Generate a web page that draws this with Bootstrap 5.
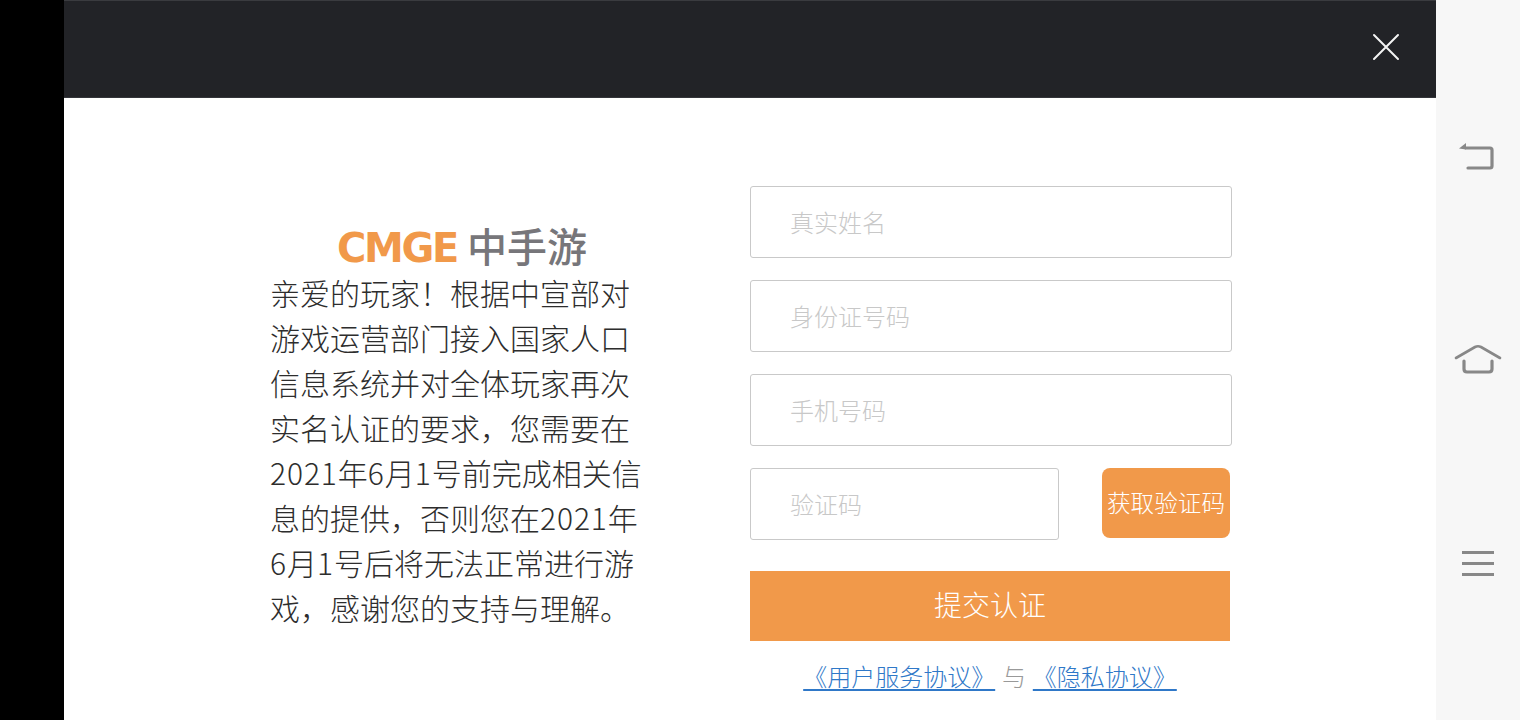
<!DOCTYPE html>
<html lang="zh-CN">
<head>
<meta charset="utf-8">
<title>实名认证</title>
<link rel="stylesheet" href="https://cdn.jsdelivr.net/npm/bootstrap@5.3.0/dist/css/bootstrap.min.css">
<style>
html,body{height:720px;overflow:hidden;background:#000}
body{font-family:"Noto Sans CJK SC","Liberation Sans",sans-serif}
.shell{height:720px}
.gutter{width:64px;background:#000}
.dialog{width:1372px;background:#fff}
.topbar{height:98px;background:#222327;border-top:1px solid #3a3b3f;border-bottom:1px solid #34353a;padding:0 36px 0 0}
.closer{background:none;border:0;padding:0;width:28px;height:28px;line-height:0;margin-top:-4px}
.sidebar{width:84px;background:#f7f7f7}
.sb-ico{width:84px;line-height:0}
.sb-back{margin-top:140px}
.sb-home{margin-top:167px}
.sb-menu{margin-top:175px}
.content{padding:88px 0 0 206px}
.intro{width:400px;padding-top:41px;margin-right:80px}
.brand{width:384px;height:36px;line-height:36px;white-space:nowrap}
.brand-en{font-family:"DejaVu Sans",sans-serif;font-weight:700;font-size:40px;color:#f1994a;letter-spacing:-2.3px}
.brand-cn{font-family:"Noto Sans CJK SC",sans-serif;font-weight:500;font-size:40px;color:#77767a;margin-left:10px}
.intro-text{font-size:30px;line-height:45px;color:#2d2d2d;font-weight:300;margin:7px 0 0;white-space:nowrap}
.num{letter-spacing:.9px}
.form-col{width:482px}
.field.form-control{height:72px;border:1px solid #c9c9c9;border-radius:3px;padding:0 0 2px 39px;font-size:24px;font-weight:300;color:#333;box-shadow:none}
.field.form-control::placeholder{color:#c8c8c8;opacity:1}
.field-short.form-control{width:309px}
.stack{display:flex;flex-direction:column;gap:22px}
.code-btn.btn{width:128px;height:70px;background:#f1994a;border:0;border-radius:8px;color:#fff;font-size:23.6px;font-weight:300;padding:0;white-space:nowrap;margin-left:43px}
.submit-btn.btn{width:480px;height:70px;background:#f1994a;border:0;border-radius:0;color:#fff;font-size:28px;font-weight:300;padding:0 0 5px;margin-top:31px;display:block}
.legal{width:480px;font-size:24px;line-height:36px;font-weight:300;margin-top:17px;color:#999;text-align:center;white-space:nowrap;word-spacing:1.5px}
.legal a{color:#2f78c8;text-underline-offset:3px;text-decoration-thickness:2px}
</style>
</head>
<body>
<div class="shell d-flex">
  <div class="gutter flex-shrink-0"></div>
  <div class="dialog flex-shrink-0 d-flex flex-column">
    <div class="topbar d-flex justify-content-end align-items-center">
      <button class="closer" type="button" aria-label="关闭">
        <svg width="28" height="28" viewBox="0 0 28 28"><path d="M2 2 26 26M26 2 2 26" stroke="#f4f4f4" stroke-width="2" stroke-linecap="round" fill="none"/></svg>
      </button>
    </div>
    <div class="content d-flex">
      <div class="intro flex-shrink-0">
        <div class="brand text-center"><span class="brand-en">CMGE</span><span class="brand-cn">中手游</span></div>
        <p class="intro-text">亲爱的玩家！根据中宣部对<br>游戏运营部门接入国家人口<br>信息系统并对全体玩家再次<br>实名认证的要求，您需要在<br><span class="num">2021</span>年<span class="num">6</span>月<span class="num">1</span>号前完成相关信<br>息的提供，否则您在<span class="num">2021</span>年<br><span class="num">6</span>月<span class="num">1</span>号后将无法正常进行游<br>戏，感谢您的支持与理解。</p>
      </div>
      <form class="form-col flex-shrink-0">
        <div class="stack">
          <input class="form-control field" type="text" placeholder="真实姓名">
          <input class="form-control field" type="text" placeholder="身份证号码">
          <input class="form-control field" type="text" placeholder="手机号码">
          <div class="d-flex align-items-start">
            <input class="form-control field field-short" type="text" placeholder="验证码">
            <button class="btn code-btn" type="button">获取验证码</button>
          </div>
        </div>
        <button class="btn submit-btn" type="button">提交认证</button>
        <div class="legal"><a href="#">《用户服务协议》</a> 与 <a href="#">《隐私协议》</a></div>
      </form>
    </div>
  </div>
  <div class="sidebar flex-shrink-0 d-flex flex-column">
    <div class="sb-ico sb-back d-flex justify-content-center">
      <svg width="44" height="36" viewBox="0 0 44 36"><path d="M10 8H34Q36 8 36 10V26Q36 28 34 28H12" stroke="#888" stroke-width="3.200" stroke-linecap="round" fill="none"/><path d="M3 8.500 10 3V9.500Z" fill="#888"/></svg>
    </div>
    <div class="sb-ico sb-home d-flex justify-content-center">
      <svg width="48" height="32" viewBox="0 0 48 32"><path d="M2 15 21 4Q24 2.500 27 4L46 15" stroke="#888" stroke-width="2.600" stroke-linecap="round" fill="none"/><path d="M10 18V26Q10 29 13 29H35Q38 29 38 26V18" stroke="#888" stroke-width="3.200" stroke-linecap="round" fill="none"/></svg>
    </div>
    <div class="sb-ico sb-menu d-flex justify-content-center">
      <svg width="34" height="28" viewBox="0 0 34 28"><path d="M1 2.500H33M1 13.500H33M1 24.500H33" stroke="#888" stroke-width="3" fill="none"/></svg>
    </div>
  </div>
</div>
<script src="https://cdn.jsdelivr.net/npm/bootstrap@5.3.0/dist/js/bootstrap.bundle.min.js"></script>
</body>
</html>
